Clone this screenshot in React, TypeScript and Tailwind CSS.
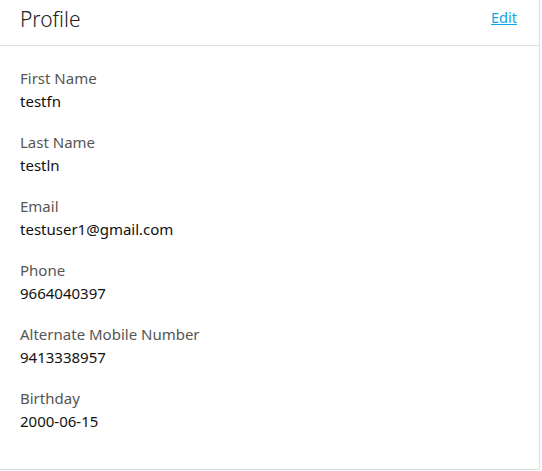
const fields = [
  { label: "First Name", value: "testfn" },
  { label: "Last Name", value: "testln" },
  { label: "Email", value: "testuser1@gmail.com" },
  { label: "Phone", value: "9664040397" },
  { label: "Alternate Mobile Number", value: "9413338957" },
  { label: "Birthday", value: "2000-06-15" },
];

export default function App() {
  return (
    <div className="w-[540px] h-[470px] bg-white border-r border-b border-[#dedede] font-['Noto_Sans',sans-serif]">
      <header className="h-[46px] px-5 flex items-center justify-between border-b border-[#dedede]">
        <h1 className="text-[21px] font-light text-[#222] leading-none pb-[7px]">Profile</h1>
        <a href="#" className="text-[14.5px] text-[#0ea5e9] underline pb-[10px] mr-[2px]">Edit</a>
      </header>
      <div className="px-5 pt-[21px] flex flex-col gap-[19px]">
        {fields.map((f) => (
          <div key={f.label} className="flex flex-col">
            <span className="text-[15px] leading-[22px] text-[#555]">{f.label}</span>
            <span className="text-[15px] leading-[22px] text-[#111] mt-[1px]">{f.value}</span>
          </div>
        ))}
      </div>
    </div>
  );
}
